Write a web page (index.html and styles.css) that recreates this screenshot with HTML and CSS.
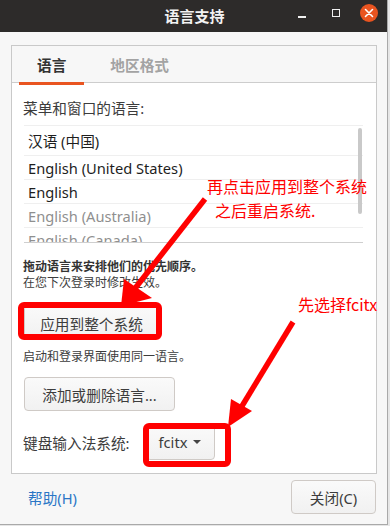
FILE: index.html
```html
<!DOCTYPE html>
<html>
<head>
  <title>语言支持</title>
  <meta charset="UTF-8" />
  <meta name="viewport" content="width=device-width, initial-scale=1.0">
  <link rel="stylesheet" href="styles.css">
</head>
<body>
  <div class="window">
    <header class="titlebar">
      <span class="title">语言支持</span>
      <div class="controls">
        <span class="ctl min"></span>
        <span class="ctl max"></span>
        <span class="ctl close">
          <svg width="18" height="18" viewBox="0 0 18 18"><path d="M5.5 5.5 L12.5 12.5 M12.5 5.5 L5.5 12.5" stroke="#fff" stroke-width="1.6" stroke-linecap="round"/></svg>
        </span>
      </div>
    </header>

    <main class="content">
      <section class="notebook">
        <nav class="tabs">
          <span class="tab active">语言</span>
          <span class="tab">地区格式</span>
        </nav>
        <div class="page">
          <p class="label">菜单和窗口的语言:</p>
          <div class="langlist">
            <div class="row first">汉语 (中国)</div>
            <div class="row">English (United States)</div>
            <div class="row">English</div>
            <div class="row muted">English (Australia)</div>
            <div class="row muted">English (Canada)</div>
            <div class="scrollbar"></div>
          </div>
          <p class="hint strong">拖动语言来安排他们的优先顺序。</p>
          <p class="hint">在您下次登录时修改生效。</p>
          <button class="btn apply">应用到整个系统</button>
          <p class="hint after-apply">启动和登录界面使用同一语言。</p>
          <button class="btn add">添加或删除语言...</button>
          <div class="im-row">
            <span class="im-label">键盘输入法系统:</span>
            <button class="btn combo">fcitx <span class="caret"></span></button>
          </div>
        </div>
      </section>

      <footer class="actions">
        <a class="help" href="#">帮助(H)</a>
        <button class="btn close-btn">关闭(C)</button>
      </footer>
    </main>

    <!-- red marks drawn on top of the screenshot -->
    <svg class="marks" width="390" height="526" viewBox="0 0 390 526">
      <g fill="none" stroke="#f00" stroke-width="6">
        <rect x="21" y="305" width="138" height="32" rx="3"/>
        <rect x="146" y="426" width="82" height="38" rx="3"/>
      </g>
      <g stroke="#f00" stroke-width="5.5">
        <line x1="205" y1="199" x2="133" y2="291"/>
        <line x1="293" y1="322" x2="239" y2="411"/>
      </g>
      <g fill="#f00">
        <polygon points="121,306 124,279 152,298"/>
        <polygon points="228,427 231,399 252,411"/>
      </g>
    </svg>
    <div class="note note-apply">再点击应用到整个系统<br><span class="indent">之后重启系统.</span></div>
    <div class="note note-fcitx">先选择fcitx</div>
  </div>
</body>
</html>
```

FILE: styles.css
```css
body {
  margin: 0;
  font-family: "Noto Sans", "Noto Sans CJK SC", sans-serif;
  font-size: 14.67px;
  color: #3c3c3c;
  background: #e6e6e6;
}
p {
  margin: 0;
}
.window {
  position: relative;
  width: 387px;
  height: 524px;
  background: #f7f7f7;
  border-right: 1px solid #a9a9a9;
  border-bottom: 1px solid #a9a9a9;
  overflow: hidden;
}
.titlebar {
  height: 32px;
  background: #2d2b2a;
  display: flex;
  align-items: center;
  justify-content: center;
  position: relative;
  padding-bottom: 2px;
  box-sizing: border-box;
}
.title {
  color: #f2f2f2;
  font-weight: bold;
  font-size: 15px;
  font-family: "Noto Sans CJK SC", sans-serif;
  margin-left: 2px;
}
.controls {
  position: absolute;
  right: 9px;
  top: 4px;
  display: flex;
  align-items: center;
  gap: 16px;
}
.ctl {
  display: block;
  width: 18px;
  height: 18px;
  position: relative;
}
.min::after {
  content: "";
  position: absolute;
  left: 6px;
  top: 12px;
  width: 8px;
  height: 1.5px;
  background: #f0f0f0;
}
.max::after {
  content: "";
  position: absolute;
  left: 6px;
  top: 5px;
  width: 6px;
  height: 6px;
  border: 1.5px solid #f0f0f0;
}
.close {
  border-radius: 50%;
  background: #e95420;
}
.close svg {
  display: block;
}
.content {
  padding: 13px 11px 0 11px;
}
.notebook {
  border: 1px solid #c9c9c9;
  width: 364px;
}
.tabs {
  display: flex;
  gap: 8px;
  padding-left: 7px;
  height: 36px;
  border-bottom: 1px solid #cdcdcd;
  background: #f7f7f7;
}
.tab {
  font-family: "Noto Sans CJK SC", sans-serif;
  font-weight: bold;
  font-size: 14.67px;
  color: #a3a3a3;
  padding: 5px 18px 0 18px;
  line-height: 28px;
  height: 31px;
  border-bottom: 3px solid transparent;
}
.tab.active {
  color: #333;
  border-bottom-color: #e95420;
}
.page {
  background: #fff;
  padding: 15px 13px 13px 12px;
}
.label {
  line-height: 20px;
  margin-left: -1px;
}
.langlist {
  position: relative;
  margin-top: 7px;
  height: 116px;
  overflow: hidden;
  border-top: 1px solid #efefef;
  border-bottom: 1px solid #cfcfcf;
}
.row {
  height: 24px;
  line-height: 24px;
  padding-left: 4px;
  border-bottom: 1px solid #efefef;
  box-sizing: border-box;
  color: #1e1e1e;
  white-space: nowrap;
}
.row.first {
  height: 30px;
  line-height: 30px;
}
.row.muted {
  color: #8f8f8f;
}
.scrollbar {
  position: absolute;
  right: 1px;
  top: 2px;
  width: 4px;
  height: 86px;
  border-radius: 2px;
  background: #c9c9c9;
}
.hint {
  font-size: 12px;
  line-height: 16px;
  margin-left: -1px;
}
.hint.strong {
  font-weight: bold;
  margin-top: 16px;
  color: #333;
}
.btn {
  font-family: "Noto Sans", "Noto Sans CJK SC", sans-serif;
  font-size: 14.67px;
  color: #3c3c3c;
  height: 34px;
  padding: 0 16px;
  background: linear-gradient(#fafafa, #f1f1f1);
  border: 1px solid #cfcac6;
  border-radius: 4px;
  display: block;
}
.apply {
  margin-top: 14px;
  width: 135px;
  padding: 3px 0 0 0;
}
.after-apply {
  margin-top: 10px;
}
.add {
  margin-top: 12px;
  width: 151px;
}
.im-row {
  margin-top: 13px;
  display: flex;
  align-items: center;
  gap: 16px;
}
.im-label {
  margin-left: -1px;
}
.combo {
  height: 36px;
  width: 69px;
  padding: 0 0 0 12px;
  display: flex;
  align-items: center;
  gap: 6px;
}
.caret {
  width: 0;
  height: 0;
  border-left: 4px solid transparent;
  border-right: 4px solid transparent;
  border-top: 4.5px solid #444;
}
.actions {
  display: flex;
  justify-content: space-between;
  align-items: center;
  margin-top: 6px;
  padding-left: 17px;
  width: 365px;
  box-sizing: border-box;
}
.help {
  color: #2a76c6;
  text-decoration: none;
}
.close-btn {
  width: 85px;
}
.marks {
  position: absolute;
  left: 0;
  top: 0;
  pointer-events: none;
}
.note {
  position: absolute;
  color: #f00;
  font-family: "Noto Sans CJK SC", sans-serif;
  font-size: 16px;
  line-height: 24px;
}
.note-apply {
  left: 207px;
  top: 174px;
}
.note-apply .indent {
  margin-left: 8px;
}
.note-fcitx {
  left: 298px;
  top: 292px;
}
```
